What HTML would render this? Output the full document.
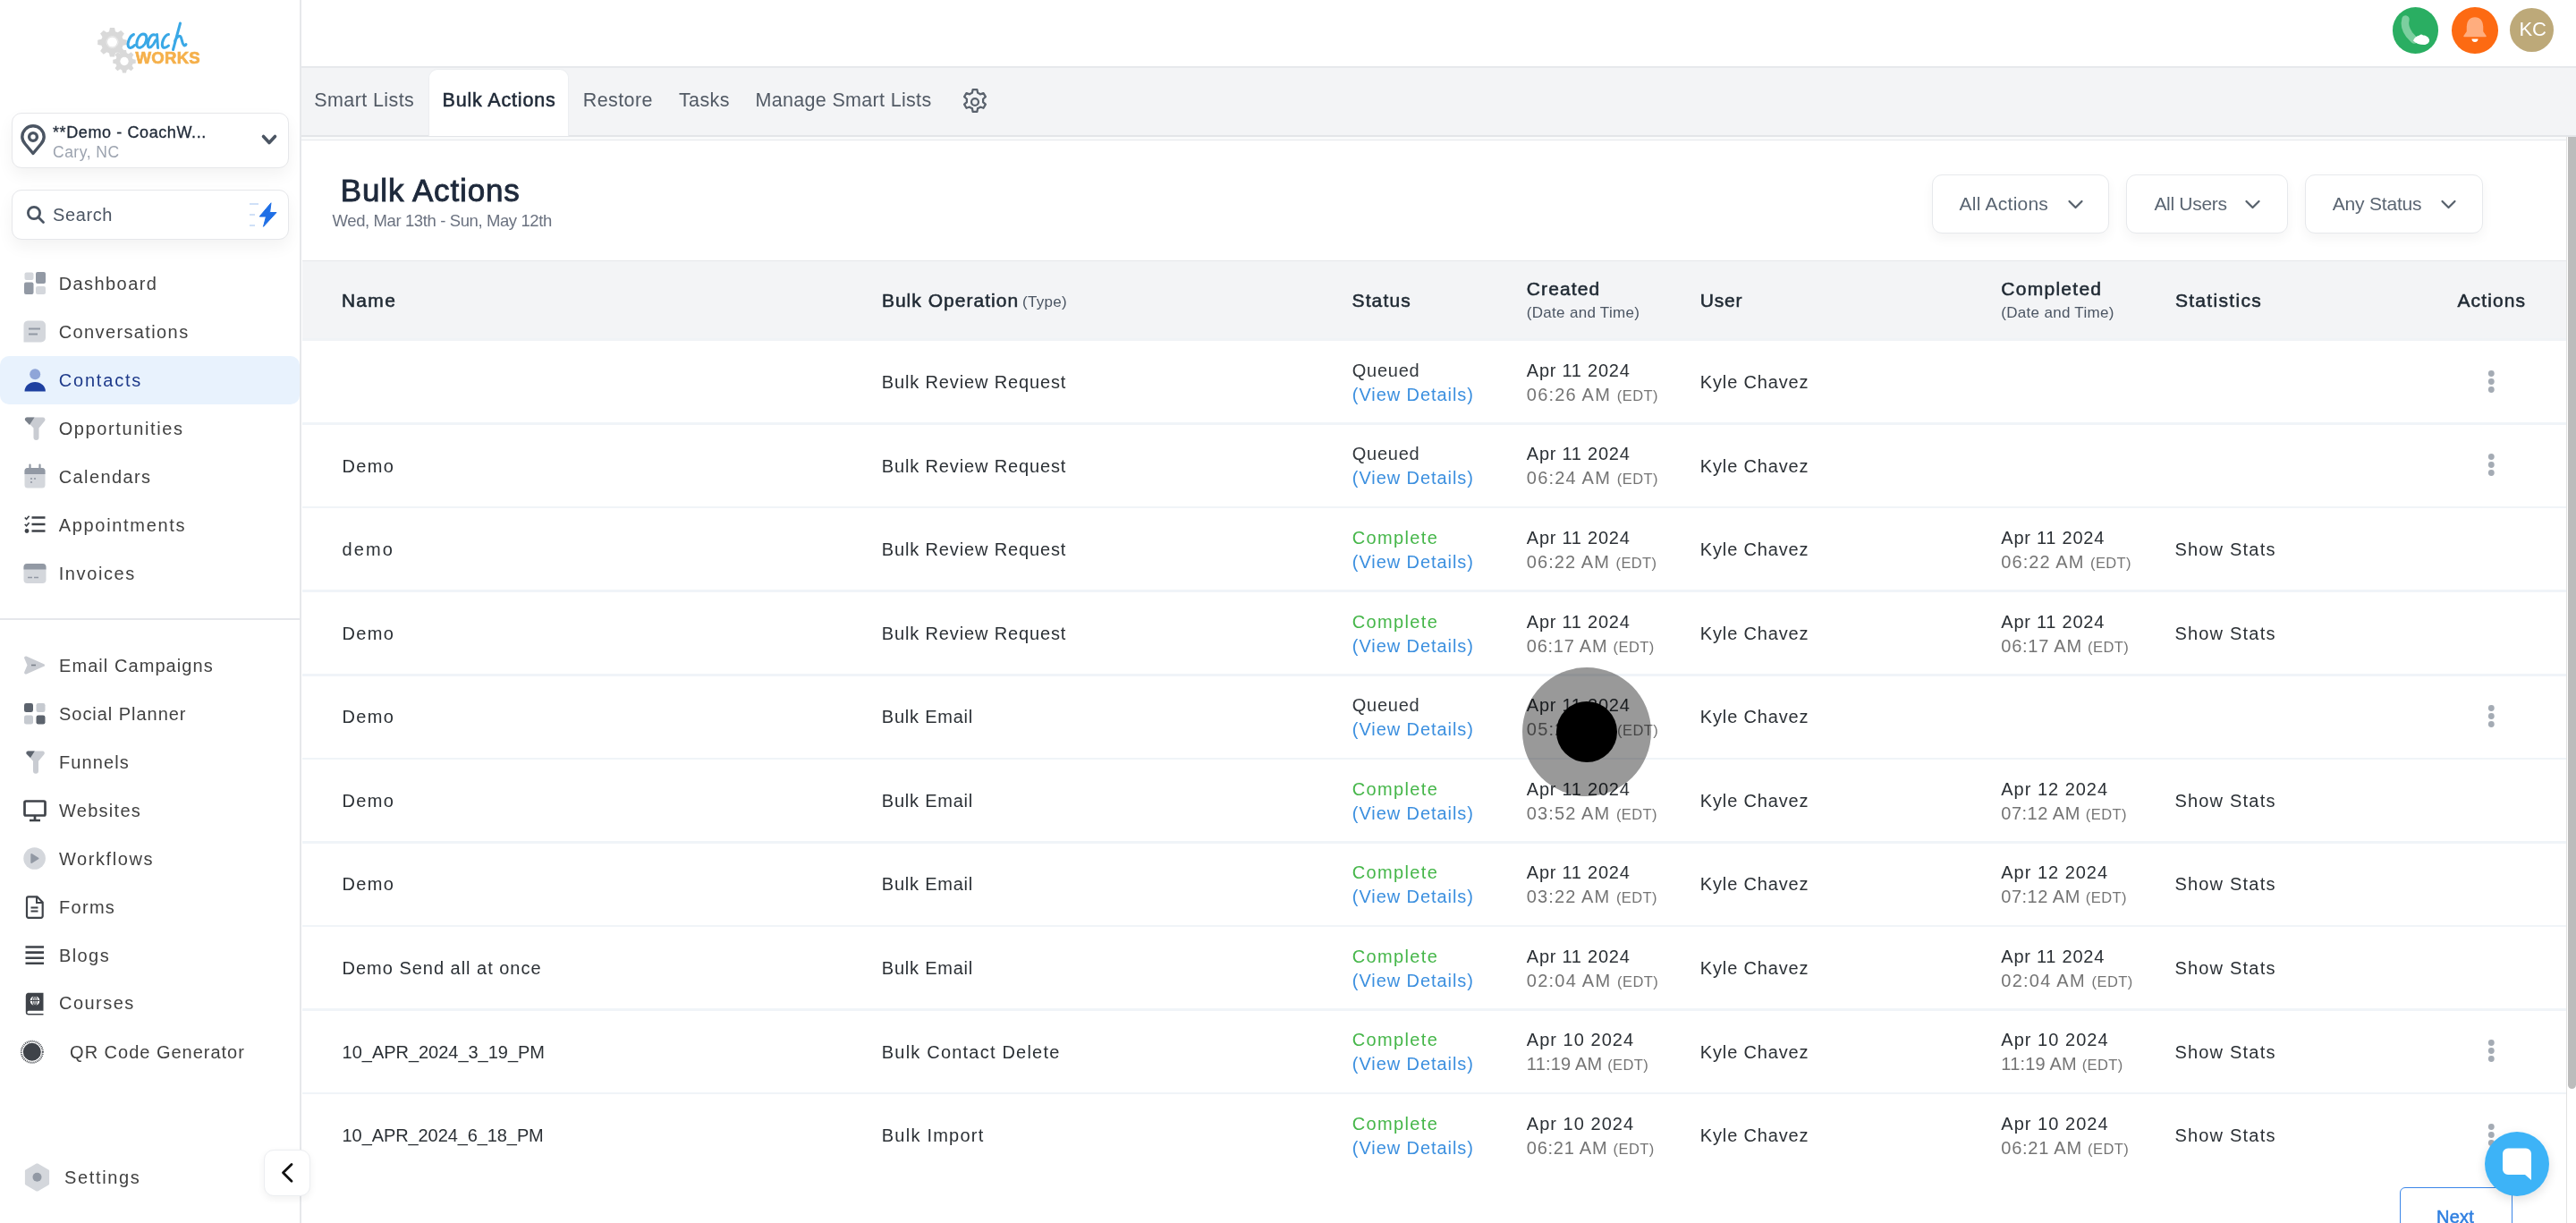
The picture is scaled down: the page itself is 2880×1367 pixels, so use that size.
<!DOCTYPE html>
<html><head><meta charset="utf-8"><style>
*{box-sizing:border-box;margin:0;padding:0}
html,body{width:2880px;height:1367px;overflow:hidden;background:#fff;font-family:"Liberation Sans",sans-serif}
.a{position:absolute;white-space:nowrap}
svg{position:absolute;overflow:visible}
</style></head><body>
<div id="wrap" style="position:absolute;left:0;top:0;width:2880px;height:1367px;will-change:transform">
<div class="a" style="left:337px;top:0;width:2543px;height:75px;background:#fff;border-bottom:1px solid #e5e7eb"></div>
<div class="a" style="left:337px;top:75px;width:2543px;height:78px;background:#f3f4f6;border-top:1px solid #e7e9ec;border-bottom:2px solid #e3e5e8"></div>
<div class="a" style="left:337px;top:153px;width:2543px;height:4px;background:#f9fafb"></div>
<div class="a" style="left:336px;top:156px;width:2534px;height:1211px;background:#fff;border-top:1.5px solid #e6e8ec;border-left:1.5px solid #e4e6ea"></div>
<div class="a" style="left:2869px;top:153px;width:11px;height:1214px;background:#fff;border-left:1px solid #e2e2e2"></div>
<div class="a" style="left:2871px;top:153px;width:9px;height:1064px;background:#bcbcbc;border-radius:0 0 5px 5px"></div>
<div class="a" style="left:0;top:0;width:335px;height:1367px;background:#fff"></div>
<div class="a" style="left:335px;top:0;width:2px;height:1367px;background:#e6e8eb"></div>
<svg style="left:0;top:0" width="335" height="100" viewBox="0 0 335 100">

<g transform="translate(125.5,47)"><path fill="#d9d9d9" d="M-2.6,-16 h5.2 l0.9,4.2 l2.6,1.1 l3.6,-2.4 l3.7,3.7 l-2.4,3.6 l1.1,2.6 l4.2,0.9 v5.2 l-4.2,0.9 l-1.1,2.6 l2.4,3.6 l-3.7,3.7 l-3.6,-2.4 l-2.6,1.1 l-0.9,4.2 h-5.2 l-0.9,-4.2 l-2.6,-1.1 l-3.6,2.4 l-3.7,-3.7 l2.4,-3.6 l-1.1,-2.6 l-4.2,-0.9 v-5.2 l4.2,-0.9 l1.1,-2.6 l-2.4,-3.6 l3.7,-3.7 l3.6,2.4 l2.6,-1.1 z"/><circle r="5.5" fill="#fff"/><circle r="6.5" fill="none" stroke="#ececec" stroke-width="1"/></g>
<g transform="translate(139,68.5) scale(0.78)"><path fill="#d9d9d9" d="M-2.6,-16 h5.2 l0.9,4.2 l2.6,1.1 l3.6,-2.4 l3.7,3.7 l-2.4,3.6 l1.1,2.6 l4.2,0.9 v5.2 l-4.2,0.9 l-1.1,2.6 l2.4,3.6 l-3.7,3.7 l-3.6,-2.4 l-2.6,1.1 l-0.9,4.2 h-5.2 l-0.9,-4.2 l-2.6,-1.1 l-3.6,2.4 l-3.7,-3.7 l2.4,-3.6 l-1.1,-2.6 l-4.2,-0.9 v-5.2 l4.2,-0.9 l1.1,-2.6 l-2.4,-3.6 l3.7,-3.7 l3.6,2.4 l2.6,-1.1 z"/><circle r="6" fill="#fff"/></g>
<path d="M149.5,38.5 C145,40 142,48 143.5,52 C144.5,54.5 148,53.5 150.5,50.5 M160,38 C155,38.5 152,47 153,51 C154,55 159,53.5 162,49 C164.5,45 165,38 160,38 Z M173,39 C168,37.5 164.5,47 165.5,51.5 C166.5,55 171,52 174,45 M175.5,38.5 L176.5,53.5 M188.5,38.5 C184,39 180.5,47 181.5,51.5 C182.5,54.5 186,53.5 188.5,51 M201.5,26 L193.5,55.5 M195.5,46 C197,42 200,39.5 201.5,40.5 C203.5,42 203,48 205.5,50.5 C206.5,51.5 207.5,50.5 208,49.5" fill="none" stroke="#3aa8e6" stroke-width="3" stroke-linecap="round" stroke-linejoin="round"/>
<text x="151.5" y="70.6" font-family="Liberation Sans" font-weight="bold" font-size="19" fill="#f5b04b" stroke="#f5b04b" stroke-width="0.7" letter-spacing="0.3" textLength="72.5" lengthAdjust="spacingAndGlyphs">WORKS</text>
</svg>
<div class="a" style="left:12.5px;top:126px;width:310px;height:61.5px;border:1.5px solid #e6e7ea;border-radius:11px;background:#fff;box-shadow:0 8px 18px rgba(0,0,0,0.05)"></div>
<svg style="left:23px;top:140px" width="28" height="34" viewBox="0 0 28 34">
<path d="M14,31.5 L5.2,21 C2.3,17.5 1.8,15.5 1.8,13 A12.2,12.2 0 0 1 26.2,13 C26.2,15.5 25.7,17.5 22.8,21 Z" fill="none" stroke="#4b5563" stroke-width="3.4" stroke-linejoin="round"/>
<circle cx="14" cy="13" r="4.4" fill="none" stroke="#4b5563" stroke-width="3.4"/>
</svg>
<div class="a" style="left:59.0px;top:139.0px;font-size:18px;line-height:18px;color:#1f2937;letter-spacing:0.6px;-webkit-text-stroke:0.3px #1f2937;">**Demo - CoachW...</div>
<div class="a" style="left:59.0px;top:162.2px;font-size:17.5px;line-height:17.5px;color:#9ca3af;letter-spacing:0.5px;">Cary, NC</div>
<svg style="left:292px;top:150px" width="18" height="13" viewBox="0 0 18 13"><path d="M2.5,2.5 L9,9.5 L15.5,2.5" fill="none" stroke="#4b5563" stroke-width="3.6" stroke-linecap="round" stroke-linejoin="round"/></svg>
<div class="a" style="left:12.5px;top:212px;width:310px;height:55.5px;border:1.5px solid #e6e7ea;border-radius:11px;background:#fff;box-shadow:0 8px 18px rgba(0,0,0,0.05)"></div>
<svg style="left:29px;top:229px" width="22" height="22" viewBox="0 0 22 22"><circle cx="9" cy="9" r="6.6" fill="none" stroke="#4b5563" stroke-width="2.8"/><path d="M13.8,13.8 L19.5,19.5" stroke="#4b5563" stroke-width="2.8" stroke-linecap="round"/></svg>
<div class="a" style="left:59.0px;top:230.1px;font-size:20px;line-height:20px;color:#4b5563;letter-spacing:0.6px;">Search</div>
<svg style="left:276px;top:225px" width="36" height="30" viewBox="0 0 36 30">
<path d="M3,3 h10 M3,15 h6 M3,27 h6" stroke="#cfe0f7" stroke-width="2"/>
<path d="M27,1.8 L14.2,17 L21.5,17 L18.5,28.3 L33,12.5 L25.6,12.5 Z" fill="#1f6fe6" stroke="#1f6fe6" stroke-width="1" stroke-linejoin="round"/>
</svg>
<div class="a" style="left:0;top:398px;width:335px;height:54px;background:#e8f2fd;border-radius:10px"></div>
<div class="a" style="left:65.7px;top:307.1px;font-size:20px;line-height:20px;color:#414141;letter-spacing:1.425px;">Dashboard</div>
<div class="a" style="left:65.7px;top:361.1px;font-size:20px;line-height:20px;color:#414141;letter-spacing:1.383px;">Conversations</div>
<div class="a" style="left:65.7px;top:414.9px;font-size:20px;line-height:20px;color:#1e3a8a;letter-spacing:1.814px;">Contacts</div>
<div class="a" style="left:65.7px;top:468.8px;font-size:20px;line-height:20px;color:#414141;letter-spacing:1.617px;">Opportunities</div>
<div class="a" style="left:65.7px;top:522.7px;font-size:20px;line-height:20px;color:#414141;letter-spacing:1.4px;">Calendars</div>
<div class="a" style="left:65.7px;top:576.6px;font-size:20px;line-height:20px;color:#414141;letter-spacing:1.691px;">Appointments</div>
<div class="a" style="left:65.7px;top:630.5px;font-size:20px;line-height:20px;color:#414141;letter-spacing:1.6px;">Invoices</div>
<div class="a" style="left:66.0px;top:734.1px;font-size:20px;line-height:20px;color:#414141;letter-spacing:1.07px;">Email Campaigns</div>
<div class="a" style="left:66.0px;top:787.9px;font-size:20px;line-height:20px;color:#414141;letter-spacing:0.962px;">Social Planner</div>
<div class="a" style="left:66.0px;top:841.9px;font-size:20px;line-height:20px;color:#414141;letter-spacing:1.1px;">Funnels</div>
<div class="a" style="left:66.0px;top:895.7px;font-size:20px;line-height:20px;color:#414141;letter-spacing:1.271px;">Websites</div>
<div class="a" style="left:66.0px;top:949.7px;font-size:20px;line-height:20px;color:#414141;letter-spacing:1.575px;">Workflows</div>
<div class="a" style="left:66.0px;top:1003.5px;font-size:20px;line-height:20px;color:#414141;letter-spacing:1.3px;">Forms</div>
<div class="a" style="left:66.0px;top:1057.5px;font-size:20px;line-height:20px;color:#414141;letter-spacing:1.4px;">Blogs</div>
<div class="a" style="left:66.0px;top:1111.3px;font-size:20px;line-height:20px;color:#414141;letter-spacing:1.467px;">Courses</div>
<div class="a" style="left:78.1px;top:1165.5px;font-size:20px;line-height:20px;color:#414141;letter-spacing:0.987px;">QR Code Generator</div>
<div class="a" style="left:72.0px;top:1306.0px;font-size:20px;line-height:20px;color:#414141;letter-spacing:1.643px;">Settings</div>
<div class="a" style="left:0;top:691px;width:335px;height:2px;background:#e5e7eb"></div>

<svg style="left:27px;top:304px" width="25" height="26" viewBox="0 0 25 26">
<rect x="0.5" y="0.5" width="10" height="8.5" rx="2" fill="#d4d7dc"/><rect x="13" y="0" width="11" height="13" rx="2" fill="#9299a4"/>
<rect x="0" y="11.5" width="10.5" height="13.5" rx="2" fill="#9299a4"/><rect x="13" y="16" width="11" height="9" rx="2" fill="#d4d7dc"/></svg>
<svg style="left:26px;top:358px" width="26" height="26" viewBox="0 0 26 26">
<path d="M5,0.5 h15 a5,5 0 0 1 5,5 v14 a5,5 0 0 1 -5,5 h-19.5 v-19 a5,5 0 0 1 4.5,-5z" fill="#d4d7dc"/>
<path d="M6,9.5 h13 M6,15.5 h10" stroke="#9299a4" stroke-width="2"/></svg>
<svg style="left:27px;top:412px" width="25" height="26" viewBox="0 0 25 26">
<circle cx="12.2" cy="6.3" r="6" fill="#8fa5d8"/><path d="M0.5,25.5 a11.7,10.5 0 0 1 23.4,0 z" fill="#1e40a0"/></svg>
<svg style="left:27px;top:466px" width="24" height="26" viewBox="0 0 24 26">
<path d="M3,0.5 h18 a2.5,2.5 0 0 1 2,4 l-6.5,8 v10.5 a3,3 0 0 1 -6,0 v-10.5 l-8,-8.5 a2.3,2.3 0 0 1 0.5,-3.5z" fill="#c9ccd2"/>
<path d="M3,0.5 h8.5 l-5.5,8.5 l-5,-5.3 a2.3,2.3 0 0 1 2,-3.2z" fill="#7a818b"/></svg>
<svg style="left:27px;top:519px" width="24" height="27" viewBox="0 0 24 27">
<rect x="0.5" y="4" width="23" height="22.5" rx="3.5" fill="#d4d7dc"/><path d="M0.5,7.5 a3.5,3.5 0 0 1 3.5,-3.5 h16 a3.5,3.5 0 0 1 3.5,3.5 v3.5 h-23z" fill="#9299a4"/>
<path d="M6.5,0.5 v5 M17.5,0.5 v5" stroke="#9299a4" stroke-width="2.2" stroke-linecap="round"/>
<circle cx="8" cy="16" r="1.1" fill="#9299a4"/><circle cx="12" cy="16" r="1.1" fill="#9299a4"/><circle cx="8" cy="20" r="1.1" fill="#9299a4"/></svg>
<svg style="left:27px;top:576px" width="24" height="21" viewBox="0 0 24 21">
<path d="M8.5,2.5 h15 M8.5,10 h15 M8.5,17.5 h15" stroke="#3f4349" stroke-width="2.6"/>
<path d="M0.8,2.5 l1.8,1.8 l3,-3.5 M0.8,10 l1.8,1.8 l3,-3.5" stroke="#3f4349" stroke-width="1.7" fill="none"/><circle cx="3" cy="17.5" r="2.4" fill="#3f4349"/></svg>
<svg style="left:26px;top:629px" width="26" height="24" viewBox="0 0 26 24">
<rect x="0.5" y="1" width="25" height="22" rx="4" fill="#d4d7dc"/><path d="M0.5,5 a4,4 0 0 1 4,-4 h17 a4,4 0 0 1 4,4 v2.5 h-25z" fill="#9299a4"/>
<path d="M5,16.5 h5 M12,16.5 h5" stroke="#9299a4" stroke-width="1.6"/></svg>
<svg style="left:27px;top:732px" width="24" height="24" viewBox="0 0 24 24">
<path d="M2.5,1.5 L21.5,10 a1.5,1.5 0 0 1 0,3 L2.5,21.5 a1.8,1.8 0 0 1 -2.3,-2.3 L3.5,11.5 L0.2,3.8 a1.8,1.8 0 0 1 2.3,-2.3z" fill="#c9ccd2"/>
<path d="M8,11.5 h5" stroke="#7a818b" stroke-width="1.6"/></svg>
<svg style="left:27px;top:786px" width="25" height="25" viewBox="0 0 25 25">
<rect x="0" y="0" width="10" height="10" rx="2.3" fill="#5c636d"/><rect x="13.5" y="0" width="10" height="10" rx="2.3" fill="#c6cad0"/>
<rect x="0" y="13.5" width="10" height="10" rx="2.3" fill="#c6cad0"/><rect x="13.5" y="13.5" width="10" height="10" rx="2.3" fill="#5c636d"/></svg>
<svg style="left:28px;top:839px" width="22" height="26" viewBox="0 0 22 26">
<path d="M3,0.5 h16.5 a2.3,2.3 0 0 1 1.8,3.8 l-6.3,7.5 v11 a3,3 0 0 1 -6,0 v-11 l-7.5,-8 a2.3,2.3 0 0 1 1.5,-3.3z" fill="#c9ccd2"/>
<path d="M3,0.5 h7.8 l-4.8,7.5 l-4.5,-4.6 a2.3,2.3 0 0 1 1.5,-2.9z" fill="#5c636d"/></svg>
<svg style="left:26px;top:894px" width="27" height="25" viewBox="0 0 27 25">
<rect x="1.5" y="1.5" width="23" height="16" rx="1.5" fill="none" stroke="#3f4349" stroke-width="2.7"/>
<path d="M13,18 v4.5 M7,23 h12" stroke="#3f4349" stroke-width="2.7"/></svg>
<svg style="left:26px;top:947px" width="26" height="26" viewBox="0 0 26 26">
<circle cx="12.6" cy="12.5" r="12.3" fill="#d4d7dc"/><path d="M9.3,8 L16.5,12.5 L9.3,17 z" fill="#9299a4" stroke="#9299a4" stroke-width="2" stroke-linejoin="round"/></svg>
<svg style="left:29px;top:1001px" width="21" height="26" viewBox="0 0 21 26">
<path d="M2.8,1.3 h9.7 l6.2,6.2 v15.5 a1.8,1.8 0 0 1 -1.8,1.8 h-14.1 a1.8,1.8 0 0 1 -1.8,-1.8 v-19.9 a1.8,1.8 0 0 1 1.8,-1.8z" fill="none" stroke="#3f4349" stroke-width="2.2" stroke-linejoin="round"/>
<path d="M12,1.5 v6.5 h6.5" fill="none" stroke="#3f4349" stroke-width="2"/><path d="M5.5,13.5 h8 M5.5,17.5 h8" stroke="#3f4349" stroke-width="2"/></svg>
<svg style="left:28px;top:1057px" width="22" height="22" viewBox="0 0 22 22">
<path d="M0.5,1.5 h20.5 M0.5,7.6 h20.5 M0.5,13.7 h20.5 M0.5,19.8 h20.5" stroke="#3f4349" stroke-width="2.6"/></svg>
<svg style="left:28px;top:1109px" width="22" height="26" viewBox="0 0 22 26">
<path d="M3,0.8 h17.5 v20 h-16.5 a1.6,1.6 0 0 0 0,3.2 h16.5 v1.5 h-16.5 a3.2,3.2 0 0 1 -3.2,-3.2 v-18.3 a3.2,3.2 0 0 1 2.2,-3.2z" fill="#3f4349"/>
<circle cx="11" cy="9.5" r="5.3" fill="#fff"/><path d="M5.7,9.5 h10.6 M11,4.2 v10.6" stroke="#3f4349" stroke-width="1.1"/><ellipse cx="11" cy="9.5" rx="2.3" ry="5.3" fill="none" stroke="#3f4349" stroke-width="1.1"/></svg>
<svg style="left:23px;top:1163px" width="26" height="26" viewBox="0 0 26 26">
<circle cx="12.8" cy="12.8" r="12" fill="none" stroke="#3f4349" stroke-width="2" stroke-dasharray="1 1"/><circle cx="12.8" cy="12.8" r="10" fill="#3f4349"/></svg>
<svg style="left:27px;top:1300px" width="30" height="32" viewBox="0 0 30 32">
<path d="M14.5,2 L26.5,9 v14 L14.5,30 L2.5,23 v-14z" fill="#d4d7dc" stroke="#d4d7dc" stroke-width="3.2" stroke-linejoin="round"/><circle cx="14.5" cy="15.8" r="5" fill="#9299a4"/></svg>
<div class="a" style="left:294.5px;top:1284.5px;width:52px;height:52px;background:#fff;border:1px solid #eceef1;border-radius:11px;box-shadow:0 3px 8px rgba(0,0,0,0.06)"></div>
<svg style="left:313px;top:1299px" width="16" height="24" viewBox="0 0 16 24"><path d="M13,2.5 L3.5,11.8 L13,21.3" fill="none" stroke="#111" stroke-width="2.8" stroke-linecap="round" stroke-linejoin="round"/></svg>
<div class="a" style="left:2674.7px;top:8.2px;width:51.5px;height:51.5px;border-radius:50%;background:#2aae62"></div>
<svg style="left:2675px;top:8px" width="52" height="52" viewBox="0 0 52 52">
<path d="M14.5,13.5 C13,19 14.5,25 18.5,30.5 L24,36.5" stroke="#7ccf9f" stroke-width="8.5" stroke-linecap="round" fill="none"/>
<path d="M23,37.5 c1,-3 4,-5.5 7,-6 c1,-1.5 3,-1.5 4,0 c3,0 6.5,2 7,5 c0.5,3 -2.5,5.5 -6,5.5 c-5,0 -9,-1.5 -12,-4.5z" fill="#fff"/>
</svg>
<div class="a" style="left:2741px;top:8.2px;width:51.5px;height:51.5px;border-radius:50%;background:#fd6a12"></div>
<svg style="left:2753px;top:18px" width="28" height="32" viewBox="0 0 28 32">
<path d="M14,2 c-5.5,0 -8.5,4 -8.5,9.5 v6 l-3.5,5 h24 l-3.5,-5 v-6 c0,-5.5 -3,-9.5 -8.5,-9.5z" fill="#ffad7e" stroke="#ffad7e" stroke-width="1.5" stroke-linejoin="round"/>
<path d="M10.5,25.5 a3.5,3.5 0 0 0 7,0z" fill="#fff"/></svg>
<div class="a" style="left:2806.3px;top:9.2px;width:49px;height:49px;border-radius:50%;background:#bda979"></div>
<div class="a" style="left:2816.5px;top:21.6px;font-size:22px;line-height:22px;color:#ffffff;letter-spacing:-0.2px;">KC</div>
<div class="a" style="left:478.6px;top:77px;width:157px;height:75px;background:#fff;border-radius:10px 10px 0 0;border:1px solid #eceef1;border-bottom:none"></div>
<div class="a" style="left:351.3px;top:101.6px;font-size:21.5px;line-height:21.5px;color:#525a65;letter-spacing:0.4px;">Smart Lists</div>
<div class="a" style="left:494.5px;top:101.6px;font-size:21.5px;line-height:21.5px;color:#1f2937;letter-spacing:0.83px;-webkit-text-stroke:0.56px #1f2937;">Bulk Actions</div>
<div class="a" style="left:651.8px;top:101.6px;font-size:21.5px;line-height:21.5px;color:#525a65;letter-spacing:0.4px;">Restore</div>
<div class="a" style="left:758.9px;top:101.6px;font-size:21.5px;line-height:21.5px;color:#525a65;letter-spacing:0.4px;">Tasks</div>
<div class="a" style="left:844.5px;top:101.6px;font-size:21.5px;line-height:21.5px;color:#525a65;letter-spacing:0.32px;">Manage Smart Lists</div>
<svg style="left:1072.5px;top:96.5px" width="34" height="34" viewBox="0 0 24 24">
<path fill="none" stroke="#5a626d" stroke-width="1.6" stroke-linejoin="round" d="M10.3,2.2 h3.4 l0.5,2.6 c0.8,0.3 1.4,0.6 2,1.1 l2.5,-0.9 l1.7,2.9 l-2,1.8 c0.1,0.8 0.1,1.6 0,2.4 l2,1.8 l-1.7,2.9 l-2.5,-0.9 c-0.6,0.5 -1.2,0.8 -2,1.1 l-0.5,2.6 h-3.4 l-0.5,-2.6 c-0.8,-0.3 -1.4,-0.6 -2,-1.1 l-2.5,0.9 l-1.7,-2.9 l2,-1.8 c-0.1,-0.8 -0.1,-1.6 0,-2.4 l-2,-1.8 l1.7,-2.9 l2.5,0.9 c0.6,-0.5 1.2,-0.8 2,-1.1z"/>
<circle cx="12" cy="12" r="2.8" fill="none" stroke="#5a626d" stroke-width="1.6"/></svg>
<div class="a" style="left:380.8px;top:194.7px;font-size:35px;line-height:35px;color:#1e293b;letter-spacing:0.85px;-webkit-text-stroke:0.92px #1e293b;">Bulk Actions</div>
<div class="a" style="left:371.5px;top:237.8px;font-size:18.5px;line-height:18.5px;color:#6b7280;letter-spacing:-0.39px;">Wed, Mar 13th - Sun, May 12th</div>
<div class="a" style="left:2159.8px;top:195.2px;width:198.5px;height:65.4px;background:#fff;border:1.5px solid #e7e9ec;border-radius:11px;box-shadow:0 6px 14px rgba(0,0,0,0.045)"></div>
<div class="a" style="left:2190.6px;top:217.4px;font-size:21px;line-height:21px;color:#5a6572;letter-spacing:0.24px;">All Actions</div>
<svg style="left:2311.6px;top:222px" width="17" height="13" viewBox="0 0 17 13"><path d="M1.5,3 L8.5,10 L15.5,3" fill="none" stroke="#56606b" stroke-width="2.2" stroke-linecap="round" stroke-linejoin="round"/></svg>
<div class="a" style="left:2377.3px;top:195.2px;width:181.2px;height:65.4px;background:#fff;border:1.5px solid #e7e9ec;border-radius:11px;box-shadow:0 6px 14px rgba(0,0,0,0.045)"></div>
<div class="a" style="left:2408.4px;top:217.4px;font-size:21px;line-height:21px;color:#5a6572;letter-spacing:-0.3px;">All Users</div>
<svg style="left:2510.4px;top:222px" width="17" height="13" viewBox="0 0 17 13"><path d="M1.5,3 L8.5,10 L15.5,3" fill="none" stroke="#56606b" stroke-width="2.2" stroke-linecap="round" stroke-linejoin="round"/></svg>
<div class="a" style="left:2577.4px;top:195.2px;width:198.9px;height:65.4px;background:#fff;border:1.5px solid #e7e9ec;border-radius:11px;box-shadow:0 6px 14px rgba(0,0,0,0.045)"></div>
<div class="a" style="left:2607.8px;top:217.4px;font-size:21px;line-height:21px;color:#5a6572;letter-spacing:-0.2px;">Any Status</div>
<svg style="left:2728.5px;top:222px" width="17" height="13" viewBox="0 0 17 13"><path d="M1.5,3 L8.5,10 L15.5,3" fill="none" stroke="#56606b" stroke-width="2.2" stroke-linecap="round" stroke-linejoin="round"/></svg>
<div class="a" style="left:337.5px;top:291px;width:2531.5px;height:90px;background:#f3f4f6;border-top:1px solid #e5e7ea;border-bottom:3px solid #f0f3f6"></div>
<div class="a" style="left:381.9px;top:325.1px;font-size:21px;line-height:21px;color:#1f2933;letter-spacing:1.3px;-webkit-text-stroke:0.55px #1f2933;">Name</div>
<div class="a" style="left:985.9px;top:325.1px;font-size:21px;line-height:21px;color:#1f2933;letter-spacing:1.02px;-webkit-text-stroke:0.55px #1f2933;">Bulk Operation</div>
<div class="a" style="left:1143.0px;top:328.5px;font-size:17px;line-height:17px;color:#4b5563;letter-spacing:0.3px;">(Type)</div>
<div class="a" style="left:1511.5px;top:325.1px;font-size:21px;line-height:21px;color:#1f2933;letter-spacing:1.14px;-webkit-text-stroke:0.55px #1f2933;">Status</div>
<div class="a" style="left:1706.8px;top:312.3px;font-size:21px;line-height:21px;color:#1f2933;letter-spacing:1.13px;-webkit-text-stroke:0.55px #1f2933;">Created</div>
<div class="a" style="left:1706.8px;top:340.5px;font-size:17px;line-height:17px;color:#4b5563;letter-spacing:0.3px;">(Date and Time)</div>
<div class="a" style="left:1900.7px;top:325.1px;font-size:21px;line-height:21px;color:#1f2933;letter-spacing:0.85px;-webkit-text-stroke:0.55px #1f2933;">User</div>
<div class="a" style="left:2237.3px;top:312.3px;font-size:21px;line-height:21px;color:#1f2933;letter-spacing:1.27px;-webkit-text-stroke:0.55px #1f2933;">Completed</div>
<div class="a" style="left:2237.3px;top:340.5px;font-size:17px;line-height:17px;color:#4b5563;letter-spacing:0.3px;">(Date and Time)</div>
<div class="a" style="left:2431.9px;top:325.1px;font-size:21px;line-height:21px;color:#1f2933;letter-spacing:1.32px;-webkit-text-stroke:0.55px #1f2933;">Statistics</div>
<div class="a" style="left:2747.5px;top:325.1px;font-size:21px;line-height:21px;color:#1f2933;letter-spacing:1.1px;-webkit-text-stroke:0.55px #1f2933;">Actions</div>
<div class="a" style="left:337.5px;top:472.4px;width:2531.5px;height:2.5px;background:#f0f4f8"></div>
<div class="a" style="left:985.8px;top:417.1px;font-size:20px;line-height:20px;color:#2b3035;letter-spacing:0.856px;">Bulk Review Request</div>
<div class="a" style="left:1511.8px;top:403.8px;font-size:20px;line-height:20px;color:#33383d;letter-spacing:0.75px;">Queued</div>
<div class="a" style="left:1511.8px;top:430.8px;font-size:20px;line-height:20px;color:#3b8fdf;letter-spacing:0.935px;">(View Details)</div>
<div class="a" style="left:1706.8px;top:403.8px;font-size:20px;line-height:20px;color:#2b3035;letter-spacing:0.75px;">Apr 11 2024</div>
<div class="a" style="left:1706.8px;top:430.8px;font-size:20px;line-height:20px;color:#747474;letter-spacing:1.22px;">06:26 AM <span style="font-size:16.5px;letter-spacing:0.4px">(EDT)</span></div>
<div class="a" style="left:1900.8px;top:417.1px;font-size:20px;line-height:20px;color:#2b3035;letter-spacing:0.85px;">Kyle Chavez</div>
<svg style="left:2780px;top:412.8px" width="11" height="28" viewBox="0 0 11 28"><circle cx="5.3" cy="4.5" r="3.4" fill="#a4abb4"/><circle cx="5.3" cy="13.5" r="3.4" fill="#a4abb4"/><circle cx="5.3" cy="22.5" r="3.4" fill="#a4abb4"/></svg>
<div class="a" style="left:337.5px;top:565.9px;width:2531.5px;height:2.5px;background:#f0f4f8"></div>
<div class="a" style="left:382.6px;top:510.7px;font-size:20px;line-height:20px;color:#2b3035;letter-spacing:1.3px;">Demo</div>
<div class="a" style="left:985.8px;top:510.7px;font-size:20px;line-height:20px;color:#2b3035;letter-spacing:0.856px;">Bulk Review Request</div>
<div class="a" style="left:1511.8px;top:497.4px;font-size:20px;line-height:20px;color:#33383d;letter-spacing:0.75px;">Queued</div>
<div class="a" style="left:1511.8px;top:524.4px;font-size:20px;line-height:20px;color:#3b8fdf;letter-spacing:0.935px;">(View Details)</div>
<div class="a" style="left:1706.8px;top:497.4px;font-size:20px;line-height:20px;color:#2b3035;letter-spacing:0.75px;">Apr 11 2024</div>
<div class="a" style="left:1706.8px;top:524.4px;font-size:20px;line-height:20px;color:#747474;letter-spacing:1.22px;">06:24 AM <span style="font-size:16.5px;letter-spacing:0.4px">(EDT)</span></div>
<div class="a" style="left:1900.8px;top:510.7px;font-size:20px;line-height:20px;color:#2b3035;letter-spacing:0.85px;">Kyle Chavez</div>
<svg style="left:2780px;top:506.3px" width="11" height="28" viewBox="0 0 11 28"><circle cx="5.3" cy="4.5" r="3.4" fill="#a4abb4"/><circle cx="5.3" cy="13.5" r="3.4" fill="#a4abb4"/><circle cx="5.3" cy="22.5" r="3.4" fill="#a4abb4"/></svg>
<div class="a" style="left:337.5px;top:659.4px;width:2531.5px;height:2.5px;background:#f0f4f8"></div>
<div class="a" style="left:382.6px;top:604.2px;font-size:20px;line-height:20px;color:#2b3035;letter-spacing:2.067px;">demo</div>
<div class="a" style="left:985.8px;top:604.2px;font-size:20px;line-height:20px;color:#2b3035;letter-spacing:0.856px;">Bulk Review Request</div>
<div class="a" style="left:1511.8px;top:590.9px;font-size:20px;line-height:20px;color:#45b649;letter-spacing:1.357px;">Complete</div>
<div class="a" style="left:1511.8px;top:617.9px;font-size:20px;line-height:20px;color:#3b8fdf;letter-spacing:0.935px;">(View Details)</div>
<div class="a" style="left:1706.8px;top:590.9px;font-size:20px;line-height:20px;color:#2b3035;letter-spacing:0.75px;">Apr 11 2024</div>
<div class="a" style="left:1706.8px;top:617.9px;font-size:20px;line-height:20px;color:#747474;letter-spacing:1.07px;">06:22 AM <span style="font-size:16.5px;letter-spacing:0.4px">(EDT)</span></div>
<div class="a" style="left:1900.8px;top:604.2px;font-size:20px;line-height:20px;color:#2b3035;letter-spacing:0.85px;">Kyle Chavez</div>
<div class="a" style="left:2237.3px;top:590.9px;font-size:20px;line-height:20px;color:#2b3035;letter-spacing:0.75px;">Apr 11 2024</div>
<div class="a" style="left:2237.3px;top:617.9px;font-size:20px;line-height:20px;color:#747474;letter-spacing:1.07px;">06:22 AM <span style="font-size:16.5px;letter-spacing:0.4px">(EDT)</span></div>
<div class="a" style="left:2431.4px;top:604.2px;font-size:20px;line-height:20px;color:#2b3035;letter-spacing:1.206px;">Show Stats</div>
<div class="a" style="left:337.5px;top:753.0px;width:2531.5px;height:2.5px;background:#f0f4f8"></div>
<div class="a" style="left:382.6px;top:697.8px;font-size:20px;line-height:20px;color:#2b3035;letter-spacing:1.3px;">Demo</div>
<div class="a" style="left:985.8px;top:697.8px;font-size:20px;line-height:20px;color:#2b3035;letter-spacing:0.856px;">Bulk Review Request</div>
<div class="a" style="left:1511.8px;top:684.5px;font-size:20px;line-height:20px;color:#45b649;letter-spacing:1.357px;">Complete</div>
<div class="a" style="left:1511.8px;top:711.5px;font-size:20px;line-height:20px;color:#3b8fdf;letter-spacing:0.935px;">(View Details)</div>
<div class="a" style="left:1706.8px;top:684.5px;font-size:20px;line-height:20px;color:#2b3035;letter-spacing:0.75px;">Apr 11 2024</div>
<div class="a" style="left:1706.8px;top:711.5px;font-size:20px;line-height:20px;color:#747474;letter-spacing:0.75px;">06:17 AM <span style="font-size:16.5px;letter-spacing:0.4px">(EDT)</span></div>
<div class="a" style="left:1900.8px;top:697.8px;font-size:20px;line-height:20px;color:#2b3035;letter-spacing:0.85px;">Kyle Chavez</div>
<div class="a" style="left:2237.3px;top:684.5px;font-size:20px;line-height:20px;color:#2b3035;letter-spacing:0.75px;">Apr 11 2024</div>
<div class="a" style="left:2237.3px;top:711.5px;font-size:20px;line-height:20px;color:#747474;letter-spacing:0.75px;">06:17 AM <span style="font-size:16.5px;letter-spacing:0.4px">(EDT)</span></div>
<div class="a" style="left:2431.4px;top:697.8px;font-size:20px;line-height:20px;color:#2b3035;letter-spacing:1.206px;">Show Stats</div>
<div class="a" style="left:337.5px;top:846.5px;width:2531.5px;height:2.5px;background:#f0f4f8"></div>
<div class="a" style="left:382.6px;top:791.3px;font-size:20px;line-height:20px;color:#2b3035;letter-spacing:1.3px;">Demo</div>
<div class="a" style="left:985.8px;top:791.3px;font-size:20px;line-height:20px;color:#2b3035;letter-spacing:0.78px;">Bulk Email</div>
<div class="a" style="left:1511.8px;top:778.0px;font-size:20px;line-height:20px;color:#33383d;letter-spacing:0.75px;">Queued</div>
<div class="a" style="left:1511.8px;top:805.0px;font-size:20px;line-height:20px;color:#3b8fdf;letter-spacing:0.935px;">(View Details)</div>
<div class="a" style="left:1706.8px;top:778.0px;font-size:20px;line-height:20px;color:#2b3035;letter-spacing:0.75px;">Apr 11 2024</div>
<div class="a" style="left:1706.8px;top:805.0px;font-size:20px;line-height:20px;color:#747474;letter-spacing:1.25px;">05:21 AM <span style="font-size:16.5px;letter-spacing:0.4px">(EDT)</span></div>
<div class="a" style="left:1900.8px;top:791.3px;font-size:20px;line-height:20px;color:#2b3035;letter-spacing:0.85px;">Kyle Chavez</div>
<svg style="left:2780px;top:787.0px" width="11" height="28" viewBox="0 0 11 28"><circle cx="5.3" cy="4.5" r="3.4" fill="#a4abb4"/><circle cx="5.3" cy="13.5" r="3.4" fill="#a4abb4"/><circle cx="5.3" cy="22.5" r="3.4" fill="#a4abb4"/></svg>
<div class="a" style="left:337.5px;top:940.1px;width:2531.5px;height:2.5px;background:#f0f4f8"></div>
<div class="a" style="left:382.6px;top:884.9px;font-size:20px;line-height:20px;color:#2b3035;letter-spacing:1.3px;">Demo</div>
<div class="a" style="left:985.8px;top:884.9px;font-size:20px;line-height:20px;color:#2b3035;letter-spacing:0.78px;">Bulk Email</div>
<div class="a" style="left:1511.8px;top:871.6px;font-size:20px;line-height:20px;color:#45b649;letter-spacing:1.357px;">Complete</div>
<div class="a" style="left:1511.8px;top:898.6px;font-size:20px;line-height:20px;color:#3b8fdf;letter-spacing:0.935px;">(View Details)</div>
<div class="a" style="left:1706.8px;top:871.6px;font-size:20px;line-height:20px;color:#2b3035;letter-spacing:0.75px;">Apr 11 2024</div>
<div class="a" style="left:1706.8px;top:898.6px;font-size:20px;line-height:20px;color:#747474;letter-spacing:1.12px;">03:52 AM <span style="font-size:16.5px;letter-spacing:0.4px">(EDT)</span></div>
<div class="a" style="left:1900.8px;top:884.9px;font-size:20px;line-height:20px;color:#2b3035;letter-spacing:0.85px;">Kyle Chavez</div>
<div class="a" style="left:2237.3px;top:871.6px;font-size:20px;line-height:20px;color:#2b3035;letter-spacing:0.98px;">Apr 12 2024</div>
<div class="a" style="left:2237.3px;top:898.6px;font-size:20px;line-height:20px;color:#747474;letter-spacing:0.5px;">07:12 AM <span style="font-size:16.5px;letter-spacing:0.4px">(EDT)</span></div>
<div class="a" style="left:2431.4px;top:884.9px;font-size:20px;line-height:20px;color:#2b3035;letter-spacing:1.206px;">Show Stats</div>
<div class="a" style="left:337.5px;top:1033.6px;width:2531.5px;height:2.5px;background:#f0f4f8"></div>
<div class="a" style="left:382.6px;top:978.4px;font-size:20px;line-height:20px;color:#2b3035;letter-spacing:1.3px;">Demo</div>
<div class="a" style="left:985.8px;top:978.4px;font-size:20px;line-height:20px;color:#2b3035;letter-spacing:0.78px;">Bulk Email</div>
<div class="a" style="left:1511.8px;top:965.1px;font-size:20px;line-height:20px;color:#45b649;letter-spacing:1.357px;">Complete</div>
<div class="a" style="left:1511.8px;top:992.1px;font-size:20px;line-height:20px;color:#3b8fdf;letter-spacing:0.935px;">(View Details)</div>
<div class="a" style="left:1706.8px;top:965.1px;font-size:20px;line-height:20px;color:#2b3035;letter-spacing:0.75px;">Apr 11 2024</div>
<div class="a" style="left:1706.8px;top:992.1px;font-size:20px;line-height:20px;color:#747474;letter-spacing:1.12px;">03:22 AM <span style="font-size:16.5px;letter-spacing:0.4px">(EDT)</span></div>
<div class="a" style="left:1900.8px;top:978.4px;font-size:20px;line-height:20px;color:#2b3035;letter-spacing:0.85px;">Kyle Chavez</div>
<div class="a" style="left:2237.3px;top:965.1px;font-size:20px;line-height:20px;color:#2b3035;letter-spacing:0.98px;">Apr 12 2024</div>
<div class="a" style="left:2237.3px;top:992.1px;font-size:20px;line-height:20px;color:#747474;letter-spacing:0.5px;">07:12 AM <span style="font-size:16.5px;letter-spacing:0.4px">(EDT)</span></div>
<div class="a" style="left:2431.4px;top:978.4px;font-size:20px;line-height:20px;color:#2b3035;letter-spacing:1.206px;">Show Stats</div>
<div class="a" style="left:337.5px;top:1127.2px;width:2531.5px;height:2.5px;background:#f0f4f8"></div>
<div class="a" style="left:382.6px;top:1072.0px;font-size:20px;line-height:20px;color:#2b3035;letter-spacing:0.98px;">Demo Send all at once</div>
<div class="a" style="left:985.8px;top:1072.0px;font-size:20px;line-height:20px;color:#2b3035;letter-spacing:0.78px;">Bulk Email</div>
<div class="a" style="left:1511.8px;top:1058.7px;font-size:20px;line-height:20px;color:#45b649;letter-spacing:1.357px;">Complete</div>
<div class="a" style="left:1511.8px;top:1085.7px;font-size:20px;line-height:20px;color:#3b8fdf;letter-spacing:0.935px;">(View Details)</div>
<div class="a" style="left:1706.8px;top:1058.7px;font-size:20px;line-height:20px;color:#2b3035;letter-spacing:0.75px;">Apr 11 2024</div>
<div class="a" style="left:1706.8px;top:1085.7px;font-size:20px;line-height:20px;color:#747474;letter-spacing:1.25px;">02:04 AM <span style="font-size:16.5px;letter-spacing:0.4px">(EDT)</span></div>
<div class="a" style="left:1900.8px;top:1072.0px;font-size:20px;line-height:20px;color:#2b3035;letter-spacing:0.85px;">Kyle Chavez</div>
<div class="a" style="left:2237.3px;top:1058.7px;font-size:20px;line-height:20px;color:#2b3035;letter-spacing:0.75px;">Apr 11 2024</div>
<div class="a" style="left:2237.3px;top:1085.7px;font-size:20px;line-height:20px;color:#747474;letter-spacing:1.25px;">02:04 AM <span style="font-size:16.5px;letter-spacing:0.4px">(EDT)</span></div>
<div class="a" style="left:2431.4px;top:1072.0px;font-size:20px;line-height:20px;color:#2b3035;letter-spacing:1.206px;">Show Stats</div>
<div class="a" style="left:337.5px;top:1220.8px;width:2531.5px;height:2.5px;background:#f0f4f8"></div>
<div class="a" style="left:382.6px;top:1165.5px;font-size:20px;line-height:20px;color:#2b3035;letter-spacing:-0.026px;">10_APR_2024_3_19_PM</div>
<div class="a" style="left:985.8px;top:1165.5px;font-size:20px;line-height:20px;color:#2b3035;letter-spacing:1.206px;">Bulk Contact Delete</div>
<div class="a" style="left:1511.8px;top:1152.2px;font-size:20px;line-height:20px;color:#45b649;letter-spacing:1.357px;">Complete</div>
<div class="a" style="left:1511.8px;top:1179.2px;font-size:20px;line-height:20px;color:#3b8fdf;letter-spacing:0.935px;">(View Details)</div>
<div class="a" style="left:1706.8px;top:1152.2px;font-size:20px;line-height:20px;color:#2b3035;letter-spacing:1.03px;">Apr 10 2024</div>
<div class="a" style="left:1706.8px;top:1179.2px;font-size:20px;line-height:20px;color:#747474;letter-spacing:0.19999999999999996px;">11:19 AM <span style="font-size:16.5px;letter-spacing:0.4px">(EDT)</span></div>
<div class="a" style="left:1900.8px;top:1165.5px;font-size:20px;line-height:20px;color:#2b3035;letter-spacing:0.85px;">Kyle Chavez</div>
<div class="a" style="left:2237.3px;top:1152.2px;font-size:20px;line-height:20px;color:#2b3035;letter-spacing:1.03px;">Apr 10 2024</div>
<div class="a" style="left:2237.3px;top:1179.2px;font-size:20px;line-height:20px;color:#747474;letter-spacing:0.19999999999999996px;">11:19 AM <span style="font-size:16.5px;letter-spacing:0.4px">(EDT)</span></div>
<div class="a" style="left:2431.4px;top:1165.5px;font-size:20px;line-height:20px;color:#2b3035;letter-spacing:1.206px;">Show Stats</div>
<svg style="left:2780px;top:1161.2px" width="11" height="28" viewBox="0 0 11 28"><circle cx="5.3" cy="4.5" r="3.4" fill="#a4abb4"/><circle cx="5.3" cy="13.5" r="3.4" fill="#a4abb4"/><circle cx="5.3" cy="22.5" r="3.4" fill="#a4abb4"/></svg>
<div class="a" style="left:382.6px;top:1259.1px;font-size:20px;line-height:20px;color:#2b3035;letter-spacing:-0.092px;">10_APR_2024_6_18_PM</div>
<div class="a" style="left:985.8px;top:1259.1px;font-size:20px;line-height:20px;color:#2b3035;letter-spacing:1.23px;">Bulk Import</div>
<div class="a" style="left:1511.8px;top:1245.8px;font-size:20px;line-height:20px;color:#45b649;letter-spacing:1.357px;">Complete</div>
<div class="a" style="left:1511.8px;top:1272.8px;font-size:20px;line-height:20px;color:#3b8fdf;letter-spacing:0.935px;">(View Details)</div>
<div class="a" style="left:1706.8px;top:1245.8px;font-size:20px;line-height:20px;color:#2b3035;letter-spacing:1.03px;">Apr 10 2024</div>
<div class="a" style="left:1706.8px;top:1272.8px;font-size:20px;line-height:20px;color:#747474;letter-spacing:0.75px;">06:21 AM <span style="font-size:16.5px;letter-spacing:0.4px">(EDT)</span></div>
<div class="a" style="left:1900.8px;top:1259.1px;font-size:20px;line-height:20px;color:#2b3035;letter-spacing:0.85px;">Kyle Chavez</div>
<div class="a" style="left:2237.3px;top:1245.8px;font-size:20px;line-height:20px;color:#2b3035;letter-spacing:1.03px;">Apr 10 2024</div>
<div class="a" style="left:2237.3px;top:1272.8px;font-size:20px;line-height:20px;color:#747474;letter-spacing:0.75px;">06:21 AM <span style="font-size:16.5px;letter-spacing:0.4px">(EDT)</span></div>
<div class="a" style="left:2431.4px;top:1259.1px;font-size:20px;line-height:20px;color:#2b3035;letter-spacing:1.206px;">Show Stats</div>
<svg style="left:2780px;top:1254.7px" width="11" height="28" viewBox="0 0 11 28"><circle cx="5.3" cy="4.5" r="3.4" fill="#a4abb4"/><circle cx="5.3" cy="13.5" r="3.4" fill="#a4abb4"/><circle cx="5.3" cy="22.5" r="3.4" fill="#a4abb4"/></svg>
<div class="a" style="left:2682.6px;top:1326.5px;width:126px;height:60px;background:#fff;border:1.5px solid #3b86e8;border-radius:6px"></div>
<div class="a" style="left:2724.0px;top:1349.6px;font-size:20px;line-height:20px;color:#2f7fe0;letter-spacing:0.2px;-webkit-text-stroke:0.52px #2f7fe0;">Next</div>
<div class="a" style="left:2777.8px;top:1264.6px;width:72px;height:72px;border-radius:50%;background:#3db3f7;box-shadow:0 4px 12px rgba(0,0,0,0.12)"></div>
<svg style="left:2798px;top:1283px" width="33" height="37" viewBox="0 0 33 37"><path d="M6,0.5 h20 a6,6 0 0 1 6,6 v29.5 l-7,-6 h-19 a6,6 0 0 1 -6,-6 v-17.5 a6,6 0 0 1 6,-6z" fill="#fff"/></svg>
<div class="a" style="left:1702px;top:745.5px;width:144px;height:144px;border-radius:50%;background:rgba(0,0,0,0.4)"></div>
<div class="a" style="left:1740px;top:783.5px;width:68px;height:68px;border-radius:50%;background:#000"></div>
</div></body></html>
